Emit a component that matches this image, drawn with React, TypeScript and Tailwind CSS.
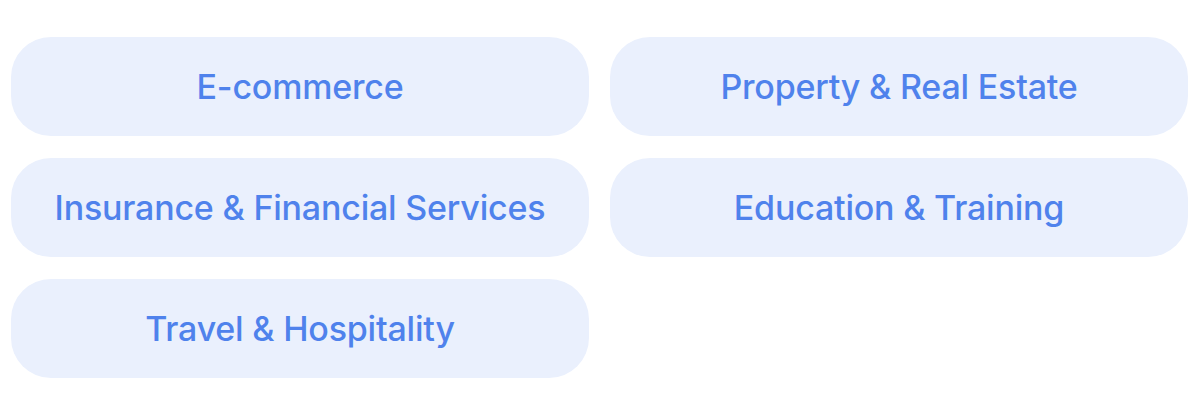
const items = [
  'E-commerce',
  'Property & Real Estate',
  'Insurance & Financial Services',
  'Education & Training',
  'Travel & Hospitality',
];

export default function App() {
  return (
    <div className="min-h-screen bg-white px-[11px] pt-[37px] font-['Inter',sans-serif]">
      <div className="grid grid-cols-2 gap-x-[21px] gap-y-[22px]">
        {items.map((label) => (
          <div
            key={label}
            className="flex h-[99px] items-center justify-center rounded-[40px] bg-[#eaf0fd] text-[34px] font-medium tracking-[-0.2px] text-[#4f82ec]"
          >
            {label}
          </div>
        ))}
      </div>
    </div>
  );
}
